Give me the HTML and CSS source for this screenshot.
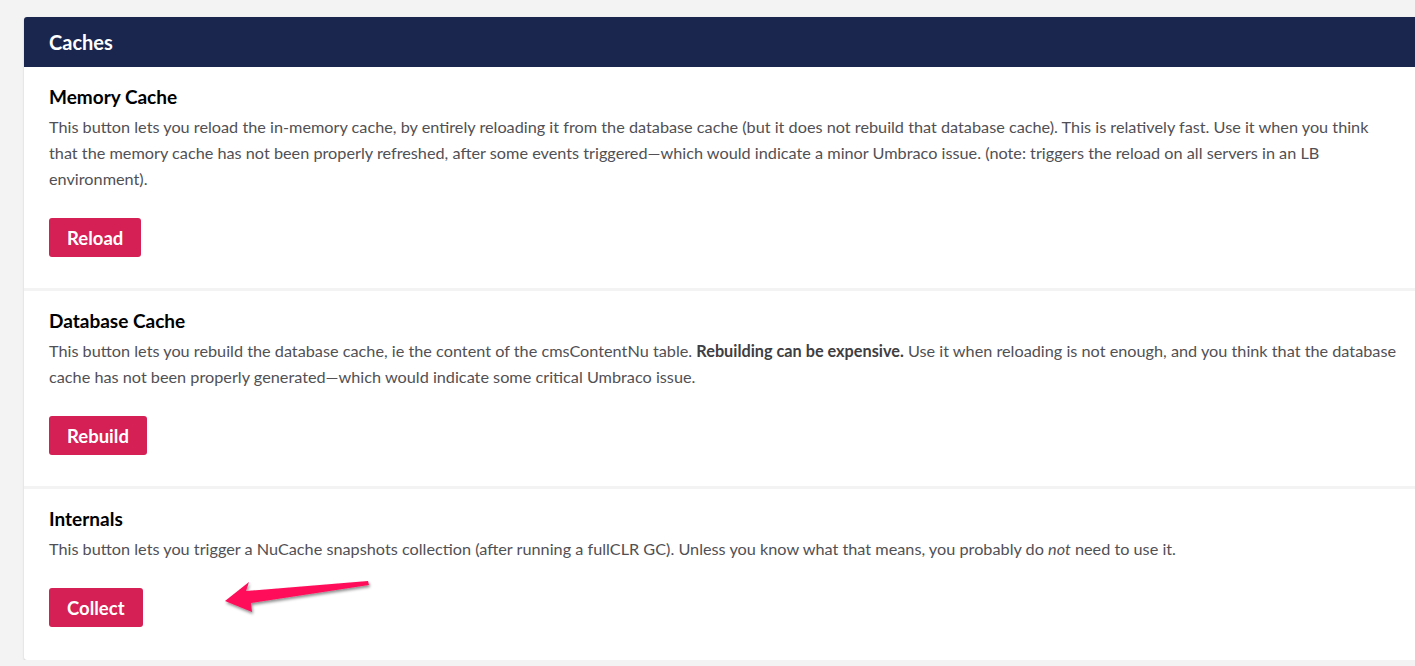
FILE: index.html
```html
<!DOCTYPE html>
<html lang="en">
<head>
    <meta charset="UTF-8">
    <meta name="viewport" content="width=device-width, initial-scale=1.0">
    <title>Published Status - Caches</title>
    <link rel="stylesheet" href="styles.css">
</head>
<body>
    <div class="page">
        <div class="box">
            <div class="box-header">
                <h2>Caches</h2>
            </div>

            <div class="box-section">
                <h3>Memory Cache</h3>
                <p>This button lets you reload the in-memory cache, by entirely reloading it from the database cache (but it does not rebuild that database cache). This is relatively fast. Use it when you think that the memory cache has not been properly refreshed, after some events triggered&mdash;which would indicate a minor Umbraco issue. (note: triggers the reload on all servers in an LB environment).</p>
                <button type="button" class="btn">Reload</button>
            </div>

            <div class="box-section">
                <h3>Database Cache</h3>
                <p>This button lets you rebuild the database cache, ie the content of the cmsContentNu table. <strong>Rebuilding can be expensive.</strong> Use it when reloading is not enough, and you think that the database cache has not been properly generated&mdash;which would indicate some critical Umbraco issue.</p>
                <button type="button" class="btn">Rebuild</button>
            </div>

            <div class="box-section">
                <h3>Internals</h3>
                <p>This button lets you trigger a NuCache snapshots collection (after running a fullCLR GC). Unless you know what that means, you probably do <em>not</em> need to use it.</p>
                <button type="button" class="btn">Collect</button>
            </div>
        </div>
    </div>

    <!-- annotation arrow drawn over the page -->
    <svg class="arrow" width="1415" height="666" viewBox="0 0 1415 666">
        <defs>
            <filter id="shadow" x="-20%" y="-50%" width="140%" height="200%">
                <feDropShadow dx="1" dy="2" stdDeviation="1.5" flood-color="#000" flood-opacity="0.45"/>
            </filter>
        </defs>
        <polygon filter="url(#shadow)" fill="#ff0e5a"
                 points="225,601 249,582 246,591 368,581 369,585 251,603 252,612"/>
    </svg>
</body>
</html>
```

FILE: styles.css
```css
body, h2, h3, p {
    margin: 0;
    padding: 0;
}

body {
    font-family: Lato, "Open Sans", sans-serif;
    background-color: #f4f3f4;
    overflow: hidden;
}

.page {
    padding: 17px 0 0 24px;
}

.box {
    width: 1400px;
    background-color: #fff;
    border-radius: 3px;
    box-shadow: 0 1px 2px rgba(0, 0, 0, 0.18);
    overflow: hidden;
}

.box-header {
    background-color: #1b264f;
    height: 50px;
    padding: 0 25px;
    display: flex;
    align-items: center;
}

.box-header h2 {
    color: #fff;
    font-size: 20px;
    font-weight: 700;
    line-height: 24px;
}

.box-section {
    padding: 20px 25px 31px;
    border-top: 3px solid #f4f3f4;
}

.box-header + .box-section {
    border-top: none;
}

.box-section:last-child {
    padding-bottom: 33px;
}

.box-section h3 {
    font-size: 19px;
    font-weight: 700;
    line-height: 20px;
    color: #000;
    margin-bottom: 7px;
}

.box-section p {
    width: 1350px;
    font-size: 16.25px;
    line-height: 26px;
    color: #515054;
    margin-bottom: 26px;
}

.box-section p strong {
    color: #3f3e42;
}

.btn {
    display: block;
    height: 39px;
    padding: 0 18px;
    border: none;
    border-radius: 3px;
    background-color: #d42054;
    color: #fff;
    font-family: Lato, "Open Sans", sans-serif;
    font-size: 18.5px;
    font-weight: 700;
    cursor: pointer;
}

.arrow {
    position: absolute;
    left: 0;
    top: 0;
    pointer-events: none;
}
```
